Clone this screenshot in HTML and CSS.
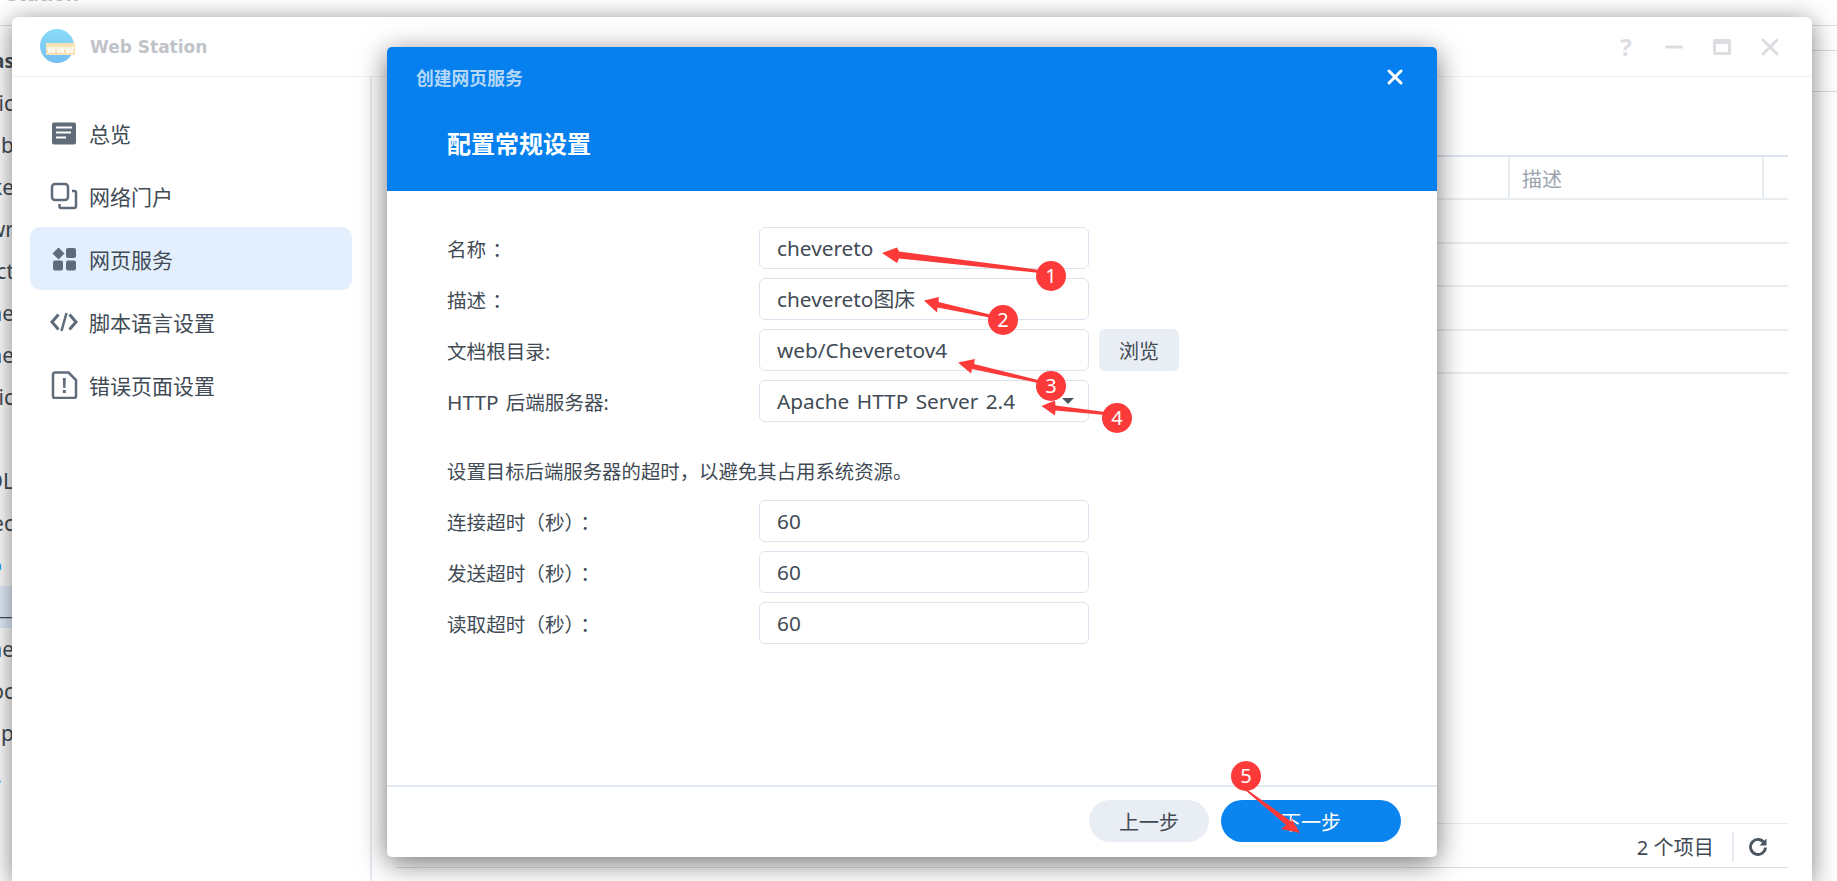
FILE: index.html
```html
<!DOCTYPE html>
<html lang="zh-CN">
<head>
  <meta charset="UTF-8">
  <title>Web Station</title>
  <link rel="stylesheet" href="styles.css">
</head>
<body>
  <!-- stuff behind the window, only the edges show -->
  <div class="backdrop">
    <div class="bg-title">Station</div>
    <div class="bg-rule"></div>
    <ul class="bg-list">
      <li class="bold">as</li>
      <li>ic</li>
      <li>b</li>
      <li>ke</li>
      <li>wr</li>
      <li>ct</li>
      <li>he</li>
      <li>he</li>
      <li>sic</li>
      <li></li>
      <li>OL</li>
      <li>ec</li>
      <li class="blue tail">o</li>
      <li class="selected"><span class="blue">o</span>__</li>
      <li>he</li>
      <li>oc</li>
      <li>np</li>
      <li class="blue tail">.</li>
    </ul>
    <div class="bg-lines">
      <div class="bg-line first"></div>
      <div class="bg-line second"></div>
      <div class="bg-line third"></div>
    </div>
  </div>

  <div class="window">
    <div class="titlebar">
      <svg class="logo" width="36" height="36" viewBox="0 0 36 36">
        <defs>
          <linearGradient id="logoBlue" x1="0" y1="0" x2="0" y2="1">
            <stop offset="0" stop-color="#8adcf8"/>
            <stop offset="1" stop-color="#74bdf2"/>
          </linearGradient>
        </defs>
        <circle cx="17" cy="17" r="17" fill="url(#logoBlue)"/>
        <rect x="6" y="14" width="29" height="12" fill="#fbe2b4"/>
        <text x="20.5" y="24" text-anchor="middle" class="logo-text">www</text>
      </svg>
      <span class="app-name">Web Station</span>
      <div class="win-buttons">
        <span class="win-help">?</span>
        <svg width="18" height="18" viewBox="0 0 18 18"><rect x="0" y="7.5" width="18" height="3" rx="1.5" fill="#dcdde0"/></svg>
        <svg width="18" height="16" viewBox="0 0 18 16"><path d="M2 0h14a2 2 0 0 1 2 2v12a2 2 0 0 1-2 2H2a2 2 0 0 1-2-2V2a2 2 0 0 1 2-2zm1 5v8h12V5z" fill="#dcdde0" fill-rule="evenodd"/></svg>
        <svg width="18" height="18" viewBox="0 0 18 18"><path d="M2 2l14 14M16 2L2 16" stroke="#dcdde0" stroke-width="3" stroke-linecap="round"/></svg>
      </div>
    </div>

    <div class="win-body">
      <ul class="sidebar">
        <li class="side-item">
          <svg class="side-icon" width="28" height="28" viewBox="0 0 28 28"><path d="M4 3.500h20a2 2 0 0 1 2 2v18a2 2 0 0 1-2 2H4a2 2 0 0 1-2-2v-18a2 2 0 0 1 2-2z" fill="#5f6b78"/><path d="M6 7.500h16v2H6zM6 12.500h15v2H6zM6 17.500h10v2H6z" fill="#fff"/></svg>
          总览
        </li>
        <li class="side-item">
          <svg class="side-icon" width="28" height="28" viewBox="0 0 28 28" fill="none" stroke="#5f6b78" stroke-width="2.500"><rect x="2" y="2" width="16" height="16" rx="3"/><path d="M22 9h2.500a1.500 1.500 0 0 1 1.500 1.500V24a2 2 0 0 1-2 2H11a1.500 1.500 0 0 1-1.500-1.500V22"/></svg>
          网络门户
        </li>
        <li class="side-item active">
          <svg class="side-icon" width="28" height="28" viewBox="0 0 28 28" fill="#5f6b78"><path d="M8.500 2.500l6 6-6 6-6-6z"/><rect x="16" y="3" width="10" height="10" rx="2"/><rect x="3" y="15.500" width="10" height="10" rx="2"/><rect x="16" y="15.500" width="10" height="10" rx="2"/></svg>
          网页服务
        </li>
        <li class="side-item">
          <svg class="side-icon" width="28" height="28" viewBox="0 0 28 28" fill="none" stroke="#5f6b78" stroke-width="3"><path d="M8.500 6.500L2 14l6.500 7.500M19.500 6.500L26 14l-6.500 7.500"/><path d="M16.500 5l-5 18" stroke-width="2.500"/></svg>
          脚本语言设置
        </li>
        <li class="side-item">
          <svg class="side-icon" width="28" height="28" viewBox="0 0 28 28"><path d="M5 1.500h13.500L26 9v16a2 2 0 0 1-2 2H5a2 2 0 0 1-2-2V3.500a2 2 0 0 1 2-2z" fill="none" stroke="#5f6b78" stroke-width="2.500"/><path d="M12.800 7h3l-.4 10h-2.200zM12.800 19h3v3h-3z" fill="#5f6b78"/></svg>
          错误页面设置
        </li>
      </ul>

      <div class="main">
        <div class="grid-head">
          <div class="col-name"></div>
          <div class="col-desc">描述</div>
          <div class="col-end"></div>
        </div>
        <div class="grid-row"></div>
        <div class="grid-row"></div>
        <div class="grid-row"></div>
        <div class="grid-row"></div>
        <div class="main-foot">
          <span class="count">2 个项目</span>
          <span class="foot-sep"></span>
          <svg width="20" height="20" viewBox="0 0 20 20" fill="none"><path d="M16.500 6.200A7.500 7.500 0 1 0 17.500 10.500" stroke="#4a5560" stroke-width="2.800"/><path d="M18.500 1.500v7h-7z" fill="#4a5560"/></svg>
        </div>
      </div>
    </div>
  </div>

  <div class="dialog">
    <div class="dialog-head">
      <div class="dialog-top">
        <span class="dialog-title">创建网页服务</span>
        <svg width="18" height="18" viewBox="0 0 18 18"><path d="M3 3l12 12M15 3L3 15" stroke="#fff" stroke-width="3" stroke-linecap="round"/></svg>
      </div>
      <h2 class="dialog-heading">配置常规设置</h2>
    </div>

    <div class="dialog-body">
      <div class="row">
        <label class="row-label">名称<span class="colon">：</span></label>
        <div class="field">chevereto</div>
      </div>
      <div class="row">
        <label class="row-label">描述<span class="colon">：</span></label>
        <div class="field">chevereto图床</div>
      </div>
      <div class="row">
        <label class="row-label">文档根目录:</label>
        <div class="field">web/Cheveretov4</div>
        <button class="browse">浏览</button>
      </div>
      <div class="row">
        <label class="row-label"><span class="latin">HTTP</span> 后端服务器:</label>
        <div class="field select">Apache HTTP Server 2.4<span class="caret"></span></div>
      </div>

      <p class="hint">设置目标后端服务器的超时，以避免其占用系统资源。</p>

      <div class="row">
        <label class="row-label">连接超时（秒）<span class="colon">：</span></label>
        <div class="field">60</div>
      </div>
      <div class="row">
        <label class="row-label">发送超时（秒）<span class="colon">：</span></label>
        <div class="field">60</div>
      </div>
      <div class="row">
        <label class="row-label">读取超时（秒）<span class="colon">：</span></label>
        <div class="field">60</div>
      </div>
    </div>

    <div class="dialog-foot">
      <button class="pill">上一步</button>
      <button class="pill primary">下一步</button>
    </div>
  </div>

  <!-- red markup drawn on top of the screenshot -->
  <svg class="marks" width="1837" height="881" viewBox="0 0 1837 881">
    <g fill="#fd3a3a">
      <path d="M882 253L897 247.500L899 251.500L1040 270L1040 273L899 258.500L897 263z"/>
      <circle cx="1051" cy="276" r="15"/>
      <path d="M924 300.500L939 297L938.500 302L992 315L992 318L937.500 307.500L937 312.500z"/>
      <circle cx="1003" cy="320" r="15"/>
      <path d="M958 362.500L975 359L974 364L1038 380L1038 383L972 369L971 373.500z"/>
      <circle cx="1051" cy="386" r="15"/>
      <path d="M1041.500 406L1055 400.500L1055.500 405.500L1105 412L1105 415L1055.500 410.500L1055 415.500z"/>
      <circle cx="1117" cy="418" r="15"/>
      <path d="M1245 790L1247 789.500L1292 822L1290.500 817L1300 833L1281 829L1286 825z"/>
      <circle cx="1246" cy="776" r="15"/>
    </g>
    <g class="mark-num" text-anchor="middle">
      <text x="1051" y="283">1</text>
      <text x="1003" y="327">2</text>
      <text x="1051" y="393">3</text>
      <text x="1117" y="425">4</text>
      <text x="1246" y="783">5</text>
    </g>
  </svg>
</body>
</html>
```

FILE: styles.css
```css
* { box-sizing: border-box; }
html, body {
  height: 100%;
}
body {
  margin: 0;
  position: relative;
  overflow: hidden;
  background: #fff;
  font-family: "Noto Sans", "Noto Sans CJK SC", sans-serif;
  font-size: 19.6px;
  color: #414b55;
}
ul {
  list-style: none;
  margin: 0;
  padding: 0;
}
button {
  font: inherit;
  border: none;
  cursor: pointer;
}

/* behind the window */
.backdrop {
  position: absolute;
  inset: 0;
}
.bg-title {
  position: absolute;
  left: 7px;
  top: -20px;
  font-size: 20px;
  font-weight: bold;
  color: #b9bdc2;
}
.bg-rule {
  height: 1px;
  margin-top: 25px;
  background: #d5d8e6;
}
.bg-list {
  position: absolute;
  left: 0;
  top: 40px;
  width: 14px;
}
.bg-list li {
  display: flex;
  justify-content: flex-end;
  align-items: center;
  height: 42px;
  font-size: 21px;
  white-space: nowrap;
}
.bg-list .bold { font-weight: bold; font-size: 19px; }
.bg-list .blue { color: #1687f0; }
.bg-list .tail { padding-right: 12px; }
.bg-list .selected { background: #e3effc; }
.bg-lines {
  position: absolute;
  right: 0;
  top: 0;
  width: 30px;
}
.bg-line {
  height: 1px;
  background: #d6dde8;
}
.bg-line.first { margin-top: 25px; }
.bg-line.second { margin-top: 24px; }
.bg-line.third { margin-top: 40px; }

/* main window */
.window {
  position: absolute;
  left: 12px;
  top: 17px;
  width: 1800px;
  height: 864px;
  display: flex;
  flex-direction: column;
  background: #fff;
  border-radius: 6px 6px 0 0;
  box-shadow: 0 4px 26px rgba(0, 0, 0, 0.5);
}
.titlebar {
  display: flex;
  align-items: center;
  height: 60px;
  flex-shrink: 0;
  padding-left: 28px;
  border-bottom: 1px solid #eef0f3;
}
.logo {
  margin-right: 14px;
  filter: blur(0.4px);
}
.logo-text {
  font-family: "DejaVu Sans", sans-serif;
  font-size: 10px;
  font-weight: bold;
  fill: #fff;
}
.app-name {
  font-family: "DejaVu Sans", sans-serif;
  font-size: 17px;
  font-weight: bold;
  color: #c0c4c9;
}
.win-buttons {
  display: flex;
  align-items: center;
  gap: 30px;
  margin-left: auto;
  padding-right: 33px;
}
.win-help {
  width: 18px;
  text-align: center;
  font-size: 24px;
  font-weight: bold;
  line-height: 24px;
  color: #dcdde0;
}
.win-body {
  flex: 1;
  display: flex;
  min-height: 0;
}
.sidebar {
  width: 360px;
  flex-shrink: 0;
  padding: 24px 18px 0 18px;
  border-right: 2px solid #e6ebf1;
}
.side-item {
  display: flex;
  align-items: center;
  height: 63px;
  padding-left: 20px;
  font-size: 21px;
  border-radius: 10px;
}
.side-item.active { background: #e3effc; }
.side-icon {
  margin-right: 11px;
  flex-shrink: 0;
}
.main {
  flex: 1;
  display: flex;
  flex-direction: column;
  padding: 78px 24px 13px 24px;
  min-width: 0;
}
.grid-head {
  display: flex;
  height: 45px;
  border-top: 2px solid #dde4ec;
  border-bottom: 2px solid #e8edf2;
}
.col-name { flex: 1; }
.col-desc {
  width: 256px;
  display: flex;
  align-items: center;
  padding: 2px 0 0 12px;
  font-size: 20px;
  color: #9aa3ad;
  border-left: 2px solid #e8edf2;
  border-right: 2px solid #e8edf2;
}
.col-end { width: 24px; }
.grid-row {
  height: 43.500px;
  border-bottom: 2px solid #e8edf2;
}
.main-foot {
  margin-top: auto;
  display: flex;
  justify-content: flex-end;
  align-items: center;
  height: 45px;
  padding: 2px 20px 0 0;
  border-top: 1px solid #e6ebf1;
  border-bottom: 1px solid #d8e1ea;
  font-size: 20.200px;
}
.count { color: #414b55; }
.foot-sep {
  width: 2px;
  height: 30px;
  margin: 0 14px 0 18px;
  background: #e6ebf1;
}

/* wizard dialog */
.dialog {
  position: absolute;
  left: 387px;
  top: 47px;
  width: 1050px;
  height: 810px;
  display: flex;
  flex-direction: column;
  background: #fff;
  border-radius: 5px;
  box-shadow: 0 6px 28px rgba(0, 0, 0, 0.55);
}
.dialog-head {
  height: 144px;
  flex-shrink: 0;
  background: #0580ee;
  border-radius: 5px 5px 0 0;
}
.dialog-top {
  display: flex;
  justify-content: space-between;
  align-items: center;
  height: 60px;
  padding: 0 33px 0 29px;
}
.dialog-title {
  font-size: 17.800px;
  font-weight: bold;
  color: #b5d8f8;
}
.dialog-heading {
  margin: 0;
  padding: 1px 0 0 60px;
  font-size: 24px;
  line-height: 72px;
  color: #fff;
}
.dialog-body {
  flex: 1;
  padding: 36px 60px 0;
}
.row {
  display: flex;
  align-items: center;
  margin-bottom: 9px;
}
.row-label {
  width: 312px;
  flex-shrink: 0;
  word-spacing: 2px;
}
.colon {
  margin-left: 6px;
}
.latin {
  font-size: 20.800px;
}
.field {
  position: relative;
  width: 330px;
  height: 42px;
  padding-left: 17px;
  font-size: 20.800px;
  word-spacing: 2px;
  line-height: 40px;
  border: 1.500px solid #dbe3ee;
  border-radius: 6px;
}
.caret {
  position: absolute;
  right: 14px;
  top: 17px;
  border-left: 6px solid transparent;
  border-right: 6px solid transparent;
  border-top: 6px solid #4a5560;
}
.browse {
  width: 80px;
  height: 42px;
  margin-left: 10px;
  font-size: 20px;
  background: #e9edf4;
  border-radius: 6px;
  color: #414b55;
}
.hint {
  height: 42px;
  margin: 29px 0 7px;
  font-size: 19.400px;
  line-height: 42px;
}
.dialog-foot {
  height: 72px;
  flex-shrink: 0;
  display: flex;
  justify-content: flex-end;
  gap: 12px;
  padding: 13px 36px 0 0;
  border-top: 2px solid #e3e9f0;
}
.pill {
  width: 120px;
  height: 42px;
  border-radius: 21px;
  font-size: 20px;
  background: #e9edf4;
  color: #414b55;
}
.pill.primary {
  width: 180px;
  background: #0a84ee;
  color: #fff;
}

/* red markup */
.marks {
  position: absolute;
  left: 0;
  top: 0;
}
.mark-num text {
  font-family: "Noto Sans", sans-serif;
  font-size: 20px;
  fill: #fff;
}
```
